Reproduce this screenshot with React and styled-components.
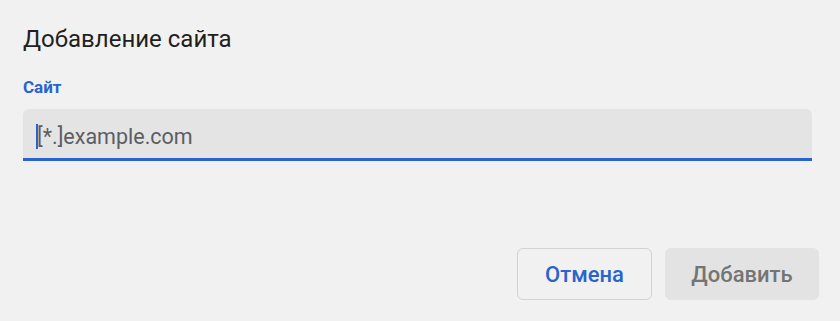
import React from 'react'
import styled, { createGlobalStyle } from 'styled-components'

const GlobalStyle = createGlobalStyle`
  html, body {
    margin: 0;
    padding: 0;
    background: #f1f1f1;
  }
  body {
    font-family: Roboto, "Liberation Sans", sans-serif;
  }
`

const Dialog = styled.div`
  width: 840px;
  height: 321px;
  box-sizing: border-box;
  padding: 25px 21px 21px 23px;
  display: flex;
  flex-direction: column;
`

const Title = styled.h1`
  margin: 0;
  font-size: 24px;
  font-weight: 400;
  line-height: 28px;
  color: #1f1f1f;
`

const Label = styled.label`
  margin-top: 24px;
  font-size: 17px;
  font-weight: 700;
  line-height: 20px;
  color: #2a62cf;
`

const Field = styled.div`
  margin-top: 12px;
  margin-right: 7px;
  height: 52px;
  box-sizing: border-box;
  background: #e4e4e5;
  border-radius: 6px 6px 0 0;
  border-bottom: 3px solid #2a62cf;
  display: flex;
  align-items: center;
  padding: 5px 12px 0 13px;
`

const Caret = styled.span`
  width: 2px;
  height: 25px;
  background: #2a62cf;
  margin-right: -1px;
`

const Placeholder = styled.span`
  font-size: 21.5px;
  color: #5b5e63;
`

const Actions = styled.div`
  margin-top: auto;
  display: flex;
  justify-content: flex-end;
  gap: 13px;
`

const Button = styled.button`
  height: 52px;
  box-sizing: border-box;
  padding: 0;
  border-radius: 6px;
  font-family: Roboto, "Liberation Sans", sans-serif;
  font-size: 22px;
  font-weight: 500;
  border: ${p => (p.primary ? '1px solid #e3e3e3' : '1.5px solid #d2d2d2')};
  background: ${p => (p.primary ? '#e3e3e3' : '#f1f1f1')};
  color: ${p => (p.primary ? '#747474' : '#2a62cf')};
  width: ${p => (p.primary ? '154px' : '135px')};
`

export default function App() {
  return (
    <>
      <GlobalStyle />
      <Dialog>
        <Title>Добавление сайта</Title>
        <Label>Сайт</Label>
        <Field>
          <Caret />
          <Placeholder>[*.]example.com</Placeholder>
        </Field>
        <Actions>
          <Button>Отмена</Button>
          <Button primary>Добавить</Button>
        </Actions>
      </Dialog>
    </>
  )
}
